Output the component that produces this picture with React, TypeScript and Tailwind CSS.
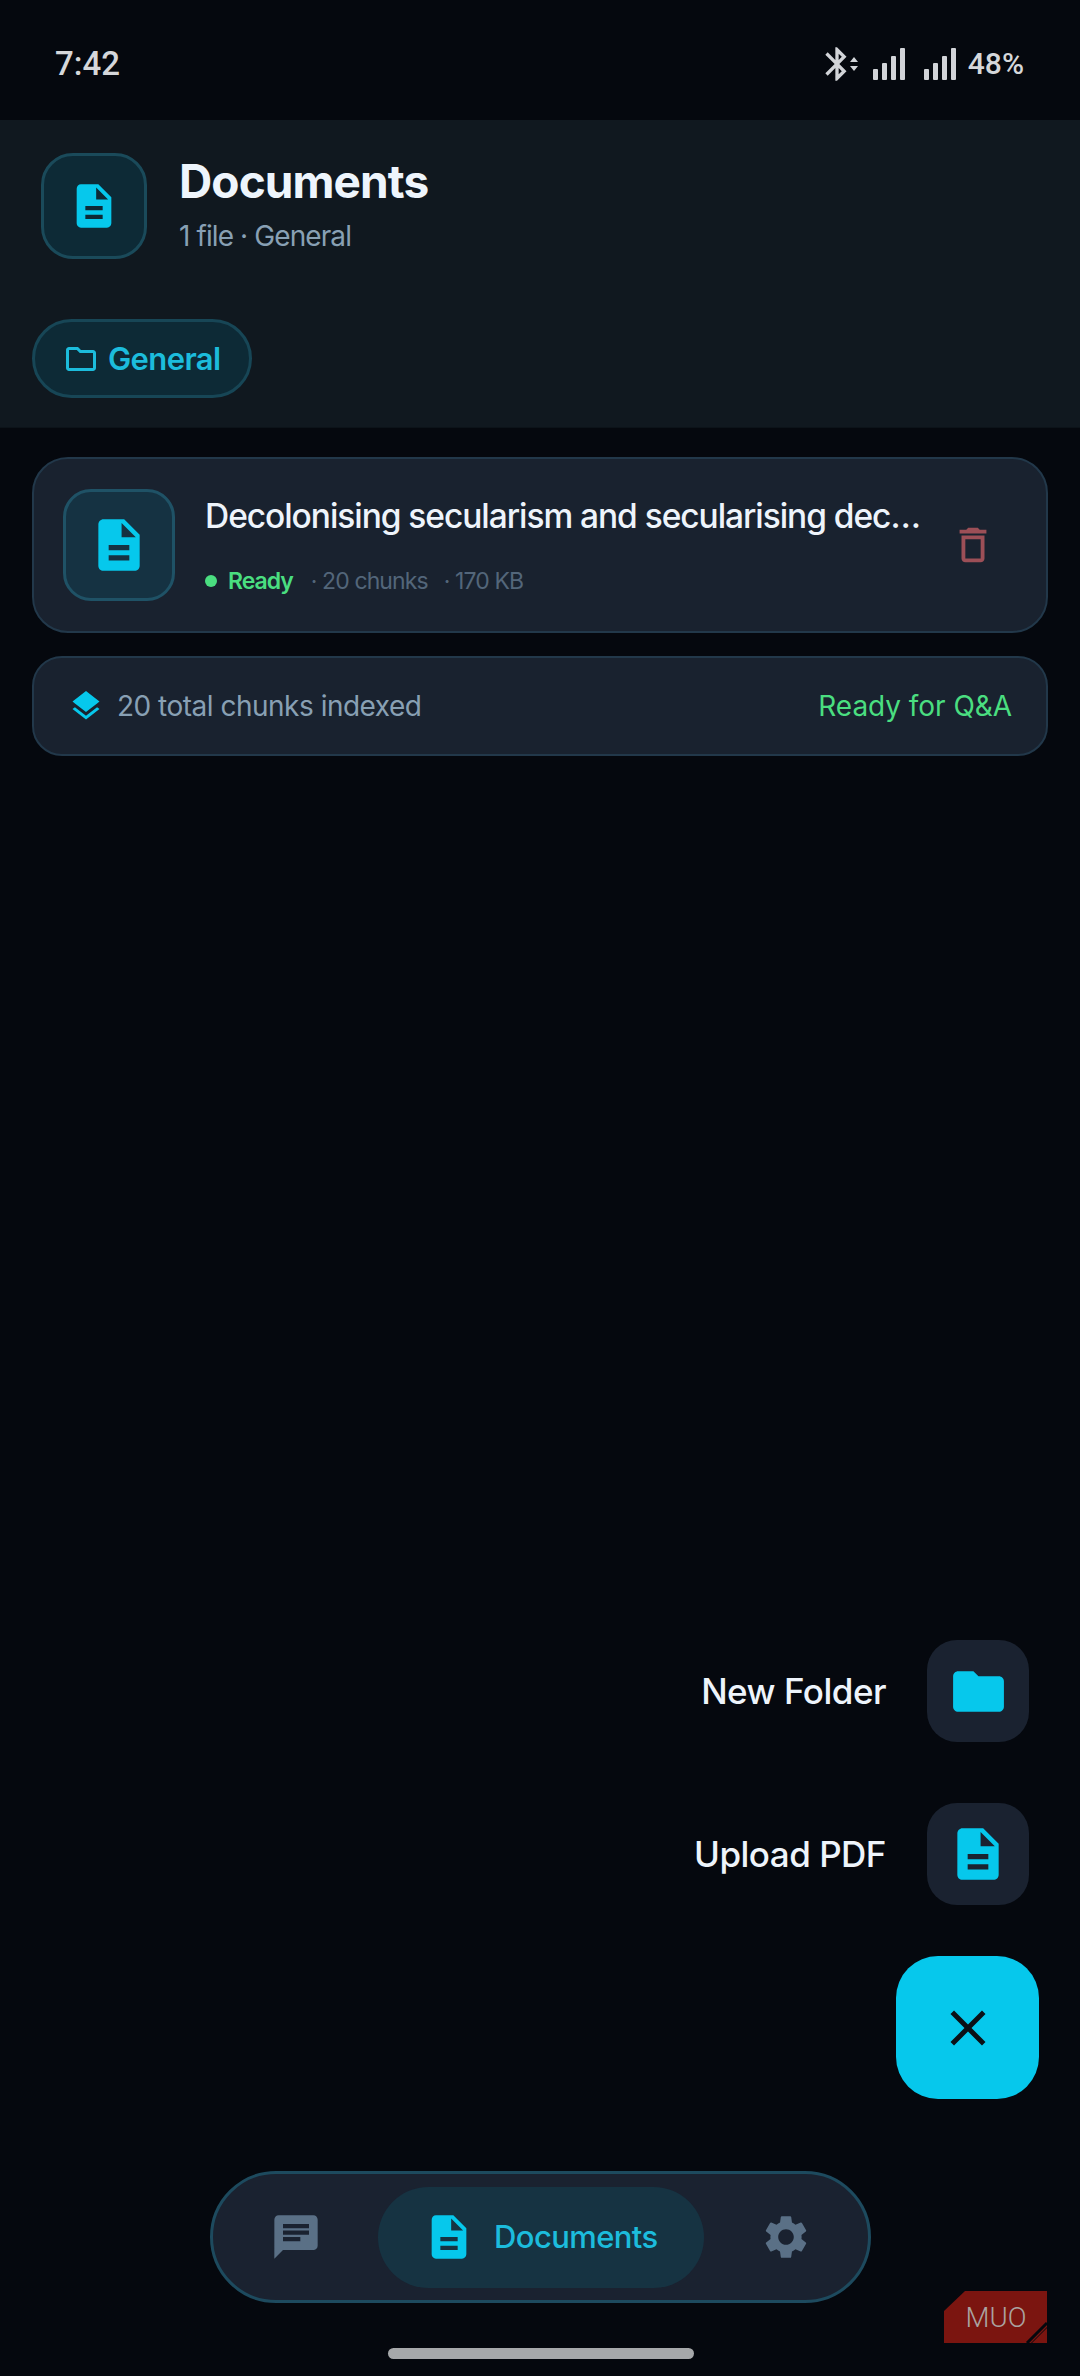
import { MdChat, MdClose, MdDescription, MdFolder, MdLayers, MdOutlineDelete, MdOutlineFolder, MdSettings, MdBluetooth } from "react-icons/md";

function SignalBars() {
  return (
    <svg width="33" height="32" viewBox="0 0 33 32" fill="#d2d4d8">
      <rect x="0" y="21" width="5" height="11" rx="1" />
      <rect x="9" y="15" width="5" height="17" rx="1" />
      <rect x="18" y="8" width="5" height="24" rx="1" />
      <rect x="27" y="0" width="5" height="32" rx="1" />
    </svg>
  );
}

function StatusBar() {
  return (
    <div className="h-[120px] flex items-center justify-between pl-[55px] pr-[56px] pt-[8px] font-['Roboto',sans-serif] text-[#d5d7da]">
      <span className="text-[33px] font-medium">7:42</span>
      <div className="flex items-center">
        <MdBluetooth size={40} className="text-[#d2d4d8] -mr-[8px]" />
        <svg width="10" height="14" viewBox="0 0 10 14" fill="#d2d4d8" className="mr-[14px]">
          <path d="M5 0l4 5H1zM5 14L1 9h8z" />
        </svg>
        <SignalBars />
        <div className="w-[18px]" />
        <SignalBars />
        <span className="ml-[11px] text-[30px] font-medium leading-none">48%</span>
      </div>
    </div>
  );
}

function Header() {
  return (
    <div className="bg-[#10181f] pt-[33px] pb-[29px] border-b border-[#0c1319]">
      <div className="flex items-center gap-[32px] pl-[41px]">
        <div className="w-[106px] h-[106px] rounded-[32px] bg-[#0d2a36] border-[3px] border-[#1a4a5a] flex items-center justify-center">
          <MdDescription size={52} className="text-[#06c8ec]" />
        </div>
        <div className="-mt-[6px]">
          <h1 className="text-[46px] leading-[58px] font-bold text-[#eef5fc] tracking-[-0.9px]">Documents</h1>
          <p className="mt-[8px] text-[28px] leading-[36px] text-[#88a0b4] tracking-[-0.9px]">1 file · General</p>
        </div>
      </div>
      <div className="mt-[60px] pl-[32px]">
        <div className="inline-flex items-center gap-[9px] h-[79px] pl-[28px] pr-[28px] rounded-full bg-[#0d2a36] border-[3px] border-[#174656] text-[#1cbcdc]">
          <MdOutlineFolder size={36} />
          <span className="pt-[2px] text-[31px] font-semibold tracking-[-0.6px]">General</span>
        </div>
      </div>
    </div>
  );
}

function FileCard() {
  return (
    <div className="h-[176px] rounded-[36px] bg-[#19222f] border-2 border-[#22384a] flex items-center pl-[29px] pr-[50px]">
      <div className="w-[112px] h-[112px] shrink-0 rounded-[28px] bg-[#153242] border-[3px] border-[#1f5266] flex items-center justify-center">
        <MdDescription size={62} className="text-[#06c8ec]" />
      </div>
      <div className="ml-[30px] min-w-0">
        <p className="whitespace-nowrap text-[33.5px] leading-[44px] font-medium text-[#eef4fb] tracking-[-1.05px]">
          Decolonising secularism and secularising dec…
        </p>
        <div className="mt-[27px] flex items-center text-[23px] leading-[32px] text-[#53667a] tracking-[-0.9px]">
          <span className="w-[12px] h-[12px] rounded-full bg-[#4ade80]" />
          <span className="ml-[11px] font-semibold text-[#4ade80] tracking-[-1px]">Ready</span>
          <span className="ml-[18px]">· 20 chunks</span>
          <span className="ml-[16px]">· 170 KB</span>
        </div>
      </div>
      <MdOutlineDelete size={46} className="ml-auto text-[#9c4f57]" />
    </div>
  );
}

function SummaryCard() {
  return (
    <div className="mt-[23px] h-[100px] rounded-[30px] bg-[#19222f] border-2 border-[#22384a] flex items-center justify-between pl-[34px] pr-[34px] text-[28px]">
      <div className="flex items-center gap-[13px] text-[#88a0b4] tracking-[-0.5px]">
        <MdLayers size={36} className="text-[#06c8ec]" />
        <span>20 total chunks indexed</span>
      </div>
      <span className="text-[#4ade80] tracking-[-0.05px]">Ready for Q&amp;A</span>
    </div>
  );
}

function FabItem({ label, children }: { label: string; children: React.ReactNode }) {
  return (
    <div className="flex items-center gap-[41px] pr-[10px]">
      <span className="text-[35px] font-medium text-[#eef4fb] tracking-[-0.5px]">{label}</span>
      <div className="w-[102px] h-[102px] rounded-[30px] bg-[#1a2230] flex items-center justify-center text-[#06c8ec]">
        {children}
      </div>
    </div>
  );
}

function FabMenu() {
  return (
    <div className="absolute right-[41px] top-[1640px] flex flex-col items-end">
      <FabItem label="New Folder">
        <MdFolder size={61} />
      </FabItem>
      <div className="h-[61px]" />
      <FabItem label="Upload PDF">
        <MdDescription size={62} />
      </FabItem>
      <div className="mt-[51px] w-[143px] h-[143px] rounded-[42px] bg-[#06c8ec] flex items-center justify-center">
        <MdClose size={60} className="text-[#0b1016]" />
      </div>
    </div>
  );
}

function BottomNav() {
  return (
    <div className="absolute left-[210px] top-[2171px] w-[661px] h-[132px] rounded-full bg-[#1a2230] border-[3px] border-[#1d4a5e] flex items-center text-[#5a7086]">
      <MdChat size={52} className="ml-[57px]" />
      <div className="ml-[56px] w-[326px] h-[101px] rounded-full bg-[#163342] flex items-center pl-[45px] text-[#06c8ec]">
        <MdDescription size={52} />
        <span className="ml-[19px] text-[31px] font-medium text-[#1cbcdc] tracking-[-0.6px]">Documents</span>
      </div>
      <MdSettings size={52} className="ml-[56px]" />
    </div>
  );
}

function MuoBadge() {
  return (
    <svg width="106" height="54" viewBox="0 0 106 54" className="absolute left-[943px] top-[2290px]">
      <path d="M22 1H104V37L88 53H1V21Z" fill="#7b1510" />
      <path d="M89 53L104 38V53Z" fill="#7b1510" />
      <path d="M84 53L104 33" stroke="#05080e" strokeWidth="3" />
      <text x="53" y="37" textAnchor="middle" fontFamily="Roboto, sans-serif" fontWeight="300" fontSize="27" fill="#aaa3a1" textLength="61" lengthAdjust="spacingAndGlyphs">MUO</text>
    </svg>
  );
}

export default function App() {
  return (
    <div className="relative w-[1080px] h-[2376px] overflow-hidden bg-[#05080e] font-['Inter',sans-serif]">
      <StatusBar />
      <Header />
      <div className="px-[32px] pt-[29px]">
        <FileCard />
        <SummaryCard />
      </div>
      <FabMenu />
      <BottomNav />
      <MuoBadge />
      <div className="absolute left-[388px] top-[2348px] w-[306px] h-[11px] rounded-full bg-[#a6a8aa]" />
    </div>
  );
}
